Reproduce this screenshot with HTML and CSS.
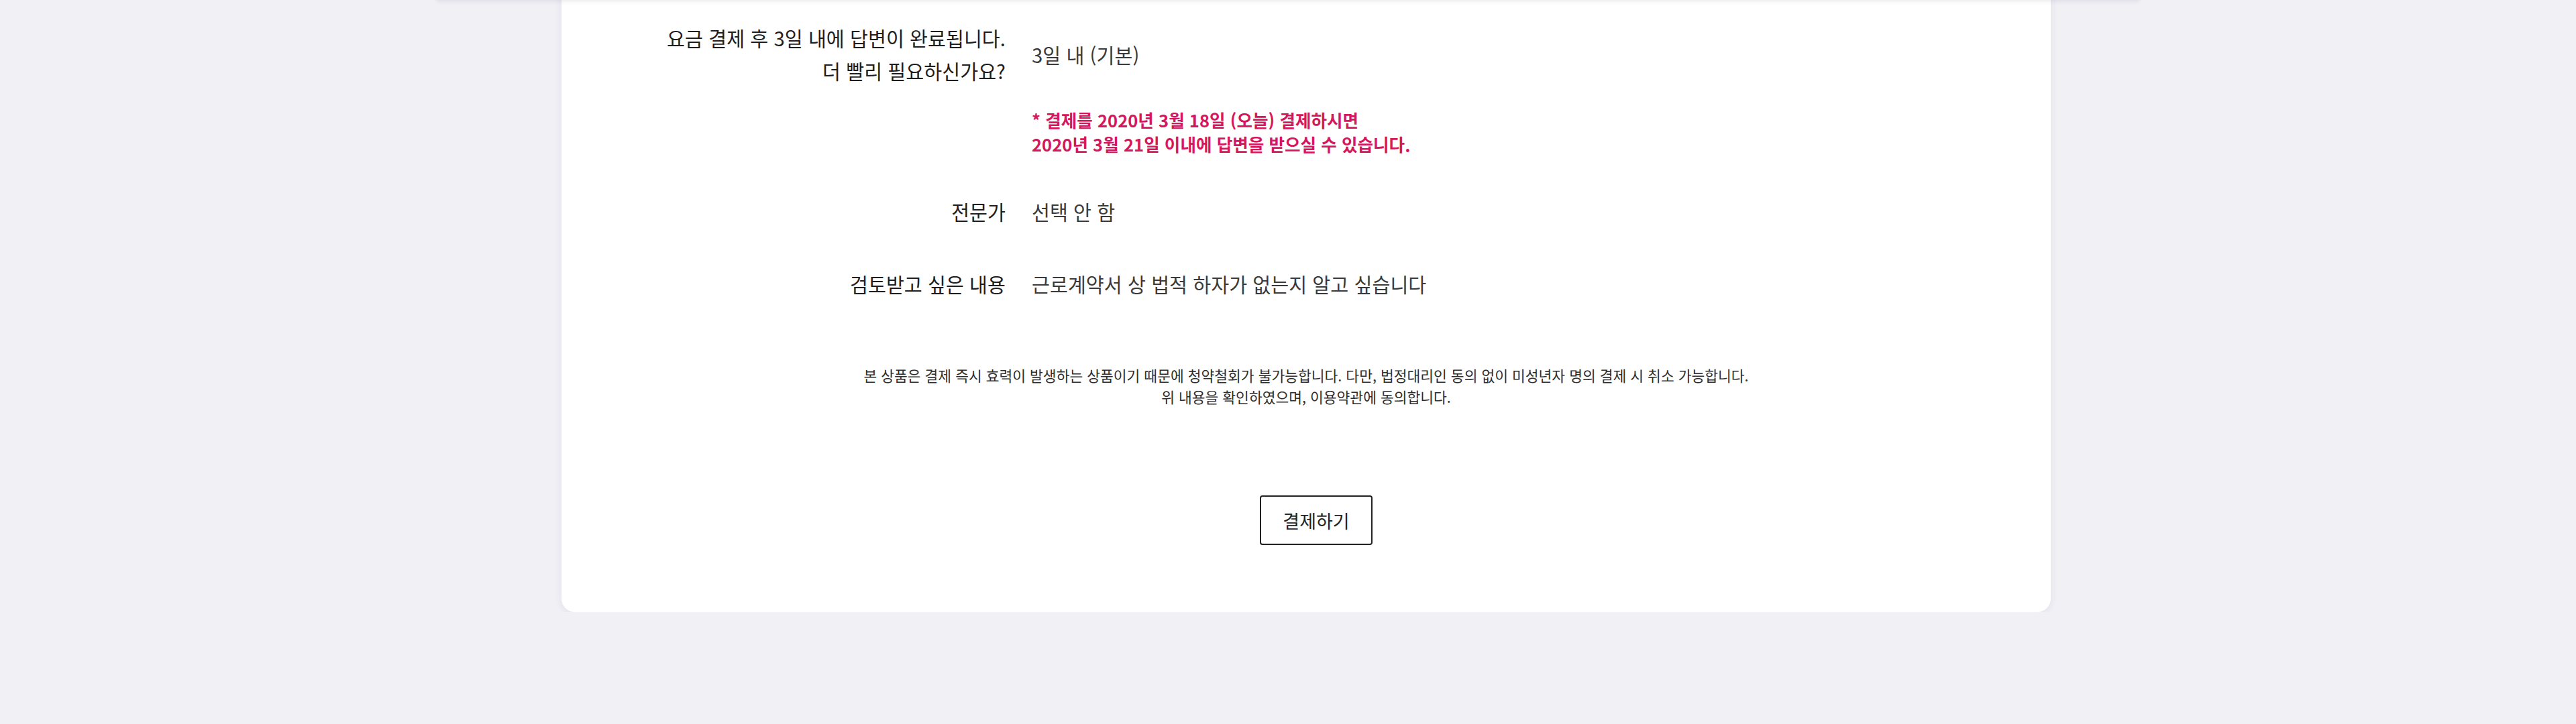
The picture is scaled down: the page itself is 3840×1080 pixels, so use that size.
FILE: index.html
```html
<!DOCTYPE html>
<html lang="ko">
<head>
  <meta charset="UTF-8">
  <title>결제 확인</title>
  <link rel="stylesheet" href="styles.css">
</head>
<body>
  <div class="top-shade"></div>
  <div class="card">
    <div class="row">
      <div class="label">요금 결제 후 3일 내에 답변이 완료됩니다.<br>더 빨리 필요하신가요?</div>
      <div class="value">3일 내 (기본)</div>
    </div>
    <div class="row note-row">
      <div></div>
      <div class="note">* 결제를 2020년 3월 18일 (오늘) 결제하시면<br>2020년 3월 21일 이내에 답변을 받으실 수 있습니다.</div>
    </div>
    <div class="row expert-row">
      <div class="label">전문가</div>
      <div class="value">선택 안 함</div>
    </div>
    <div class="row review-row">
      <div class="label">검토받고 싶은 내용</div>
      <div class="value">근로계약서 상 법적 하자가 없는지 알고 싶습니다</div>
    </div>
    <p class="notice">본 상품은 결제 즉시 효력이 발생하는 상품이기 때문에 청약철회가 불가능합니다. 다만, 법정대리인 동의 없이 미성년자 명의 결제 시 취소 가능합니다.<br>위 내용을 확인하였으며, 이용약관에 동의합니다.</p>
    <div class="actions">
      <button class="pay-btn">결제하기</button>
    </div>
  </div>
</body>
</html>
```

FILE: styles.css
```css
body {
  margin: 0;
  background-color: #f1f0f5;
  font-family: "Noto Sans CJK KR", "Noto Sans", sans-serif;
  color: #222;
}
.top-shade {
  position: absolute;
  top: -60px;
  left: 651px;
  width: 2538px;
  height: 60px;
  background-color: #fff;
  box-shadow: 0 1px 7px rgba(40, 40, 80, 0.12);
  z-index: 1;
}
.card {
  width: 2220px;
  margin: -40px 0 0 calc(50% - 1083px);
  padding: 72px 0 100px;
  background-color: #fff;
  border-radius: 20px;
  box-shadow: 0 2px 12px rgba(40, 40, 80, 0.08);
}
.row {
  display: grid;
  grid-template-columns: 662px 1fr;
  column-gap: 39px;
}
.label {
  text-align: right;
  font-size: 29.3px;
  line-height: 49px;
  color: #1e1e1e;
}
.value {
  align-self: center;
  font-size: 29.3px;
  line-height: 49px;
  color: #3a3a3a;
}
.note-row {
  margin-top: 31px;
}
.note {
  font-size: 25.6px;
  font-weight: bold;
  line-height: 36px;
  color: #d6175d;
}
.expert-row {
  margin-top: 58px;
}
.review-row {
  margin-top: 59px;
}
.notice {
  margin: 96px 0 0;
  text-align: center;
  font-size: 21.5px;
  line-height: 32px;
  color: #2e2e2e;
}
.actions {
  margin-top: 131px;
  padding-left: 30px;
  display: flex;
  justify-content: center;
}
.pay-btn {
  width: 168px;
  height: 74px;
  border: 2px solid #222;
  border-radius: 4px;
  background-color: #fff;
  font-family: inherit;
  font-size: 27px;
  color: #222;
}
```
